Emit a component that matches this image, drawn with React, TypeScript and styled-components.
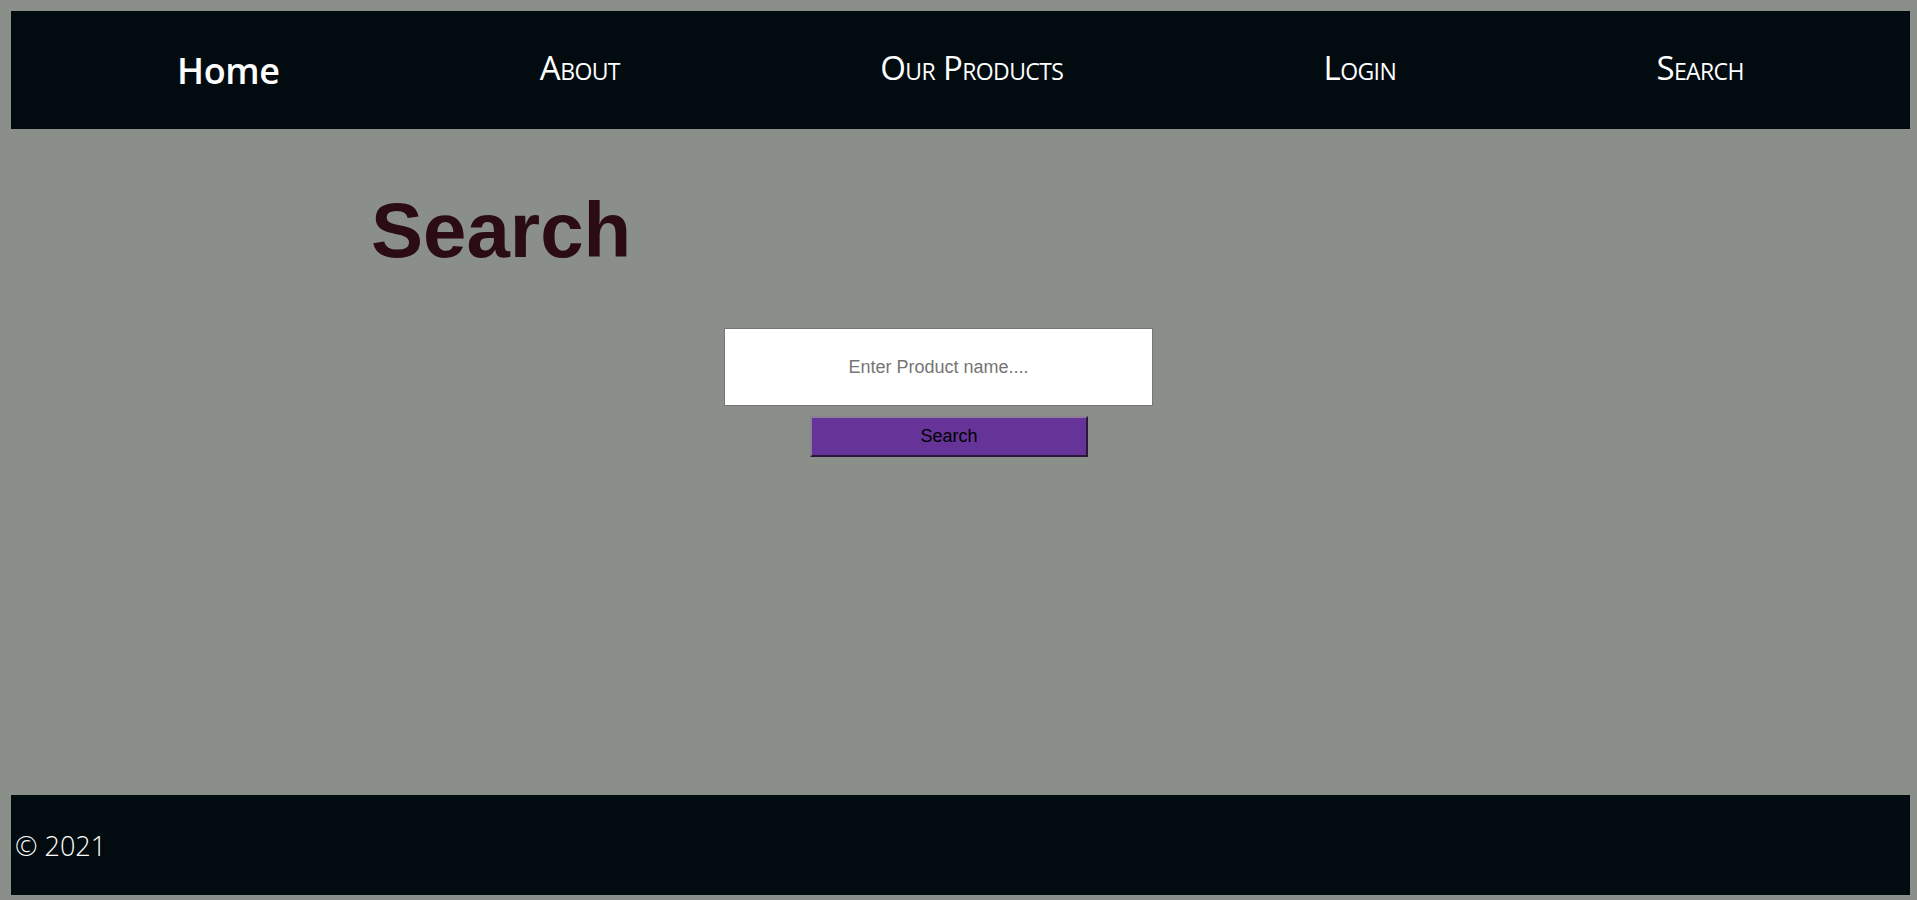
import styled, { createGlobalStyle } from 'styled-components';

const GlobalStyle = createGlobalStyle`
	html, body {
		margin: 0;
		padding: 0;
		background-color: #8b8f8a;
	}

	body {
		padding: 11px 7px 5px 11px;
		font-family: 'Open Sans', 'Liberation Sans', sans-serif;
	}
`;

const navLinks = ['About', 'Our Products', 'Login', 'Search'];

function App() {
	return (
		<>
			<GlobalStyle />
			<Page>
				<Nav>
					<HomeLink href='#'>Home</HomeLink>
					{navLinks.map((link) => (
						<NavLink key={link} href='#'>
							{link}
						</NavLink>
					))}
				</Nav>
				<Main>
					<Title>Search</Title>
					<SearchForm onSubmit={(e) => e.preventDefault()}>
						<SearchInput type='text' placeholder='Enter Product name....' />
						<SearchButton type='submit'>Search</SearchButton>
					</SearchForm>
				</Main>
				<Footer>© 2021</Footer>
			</Page>
		</>
	);
}

const Page = styled.div`
	display: flex;
	flex-direction: column;
	min-height: calc(100vh - 16px);
`;

const Nav = styled.nav`
	display: flex;
	align-items: center;
	justify-content: space-around;
	height: 118px;
	padding: 0 36px;
	background-color: #020b10;
`;

const HomeLink = styled.a`
	color: #ffffff;
	text-decoration: none;
	font-family: 'Open Sans', sans-serif;
	font-size: 36px;
	font-weight: 600;
	letter-spacing: -0.4px;
`;

const NavLink = styled.a`
	color: #ffffff;
	text-decoration: none;
	font-family: 'Open Sans', sans-serif;
	font-size: 33px;
	font-weight: 400;
	font-variant: small-caps;
	letter-spacing: -0.6px;
	margin-top: -6px;
`;

const Main = styled.main`
	flex: 1;
	display: flex;
	flex-direction: column;
	align-items: flex-start;
	padding: 62px 0 0 360px;
`;

const Title = styled.h1`
	margin: 0;
	font-family: 'Liberation Sans', Arial, sans-serif;
	font-size: 78px;
	font-weight: 700;
	line-height: 1;
	color: #2a0c12;
`;

const SearchForm = styled.form`
	display: flex;
	flex-direction: column;
	align-items: flex-start;
	gap: 10px;
	margin: 59px 0 0 353px;
`;

const SearchInput = styled.input`
	box-sizing: border-box;
	width: 429px;
	height: 78px;
	border: 1px solid #767676;
	background-color: #ffffff;
	font-family: 'Liberation Sans', Arial, sans-serif;
	font-size: 18px;
	text-align: center;
	outline: none;

	&::placeholder {
		color: #757575;
	}
`;

const SearchButton = styled.button`
	box-sizing: border-box;
	width: 278px;
	height: 41px;
	margin-left: 86px;
	background-color: #663399;
	border: 2px solid;
	border-color: #8a7f94 #2b1838 #2b1838 #8a7f94;
	color: #000000;
	font-family: 'Liberation Sans', Arial, sans-serif;
	font-size: 18px;
	cursor: pointer;
`;

const Footer = styled.footer`
	display: flex;
	align-items: center;
	height: 100px;
	padding-left: 4px;
	background-color: #020b10;
	color: #ffffff;
	font-family: 'Open Sans', sans-serif;
	font-size: 27px;
	font-weight: 300;
`;

export default App;
